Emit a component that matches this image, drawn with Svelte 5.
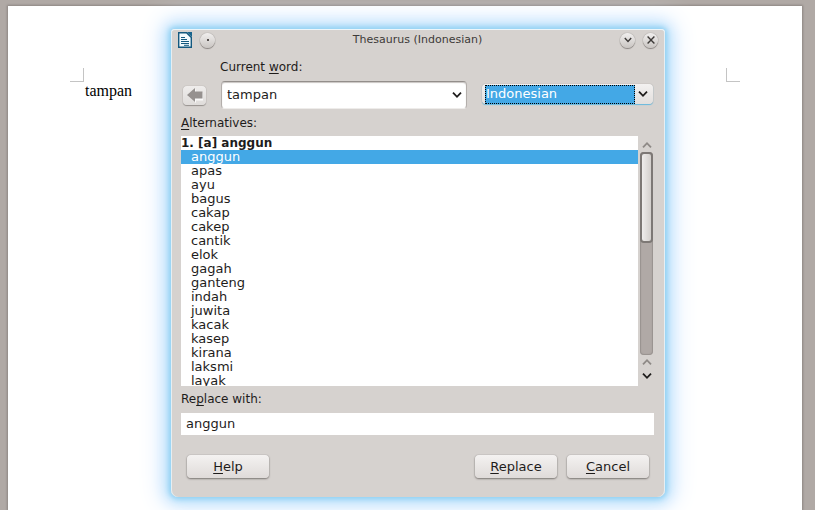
<script>
  const words = [
    'anggun', 'apas', 'ayu', 'bagus', 'cakap', 'cakep', 'cantik', 'elok', 'gagah',
    'ganteng', 'indah', 'juwita', 'kacak', 'kasep', 'kirana', 'laksmi', 'layak'
  ];
  let current = $state('tampan');
  let replacement = $state('anggun');
  let language = $state('Indonesian');
</script>

{#snippet chevron(up, size)}
  <svg class="chevron" class:up width={size} height={size} viewBox="0 0 10 10" aria-hidden="true">
    <path d="M1 2.6 5 6.8l4-4.2" fill="none" stroke="currentColor" stroke-width="1.8" />
  </svg>
{/snippet}

<div class="desktop">
  <main class="sheet">
    <div class="body-area">
      <span class="crop left"></span>
      <span class="crop right"></span>
      <p>tampan</p>
    </div>
  </main>

  <div class="dialog" role="dialog" aria-labelledby="title">
    <header>
      <svg width="14" height="16" viewBox="0 0 14 16" aria-hidden="true">
        <path d="M.7.7H8.6L13.3 5.4v9.9H.7z" fill="#f2fafd" stroke="#14597f" stroke-width="1.4" />
        <path d="M9 0h5v5z" fill="#17648d" />
        <path d="M3 5.5h4M3 7.5h6M3 9.5h8M3 11.5h8M6 13.3h5" stroke="#14597f" stroke-width="1" />
      </svg>
      <button class="round" aria-label="Window menu"><i></i></button>
      <h1 id="title">Thesaurus (Indonesian)</h1>
      <button class="round" aria-label="Minimize">{@render chevron(false, 8)}</button>
      <button class="round" aria-label="Close">
        <svg width="8" height="8" viewBox="0 0 8 8" aria-hidden="true">
          <path d="m.6.6 6.8 6.8M7.4.6.6 7.4" stroke="currentColor" stroke-width="1.4" />
        </svg>
      </button>
    </header>

    <div class="lookup">
      <label class="word-label" for="word">Current <u>w</u>ord:</label>
      <button class="back" aria-label="Previous word">
        <svg width="16" height="15" viewBox="0 0 16 15" aria-hidden="true">
          <path d="M1 8 9 1v3.500h7v8H9V15z" fill="#fbfafa" />
          <path d="M0 7 8 0v3.500h7.500v7H8V14z" fill="#96918f" />
        </svg>
      </button>
      <div class="combo">
        <input id="word" bind:value={current} />
        <button aria-label="Show recent words">{@render chevron(false, 10)}</button>
      </div>
      <div class="language">
        <select aria-label="Language" bind:value={language}>
          <option>Indonesian</option>
        </select>
        <span>{@render chevron(false, 10)}</span>
      </div>
    </div>

    <div class="label" id="alternatives"><u>A</u>lternatives:</div>
    <div class="list">
      <div class="words" role="listbox" aria-labelledby="alternatives">
        <div class="group">1. [a] anggun</div>
        {#each words as word}
          <button role="option" aria-selected={word === replacement} onclick={() => (replacement = word)}>{word}</button>
        {/each}
      </div>
      <div class="scrollbar">
        <button class="dim" aria-label="Scroll up">{@render chevron(true, 10)}</button>
        <div class="track"><div class="thumb"></div></div>
        <button class="dim" aria-label="Page up">{@render chevron(true, 10)}</button>
        <button aria-label="Scroll down">{@render chevron(false, 10)}</button>
      </div>
    </div>

    <label class="label" for="replace">Re<u>p</u>lace with:</label>
    <input class="replace" id="replace" bind:value={replacement} />

    <footer>
      <button class="push help"><u>H</u>elp</button>
      <button class="push"><u>R</u>eplace</button>
      <button class="push"><u>C</u>ancel</button>
    </footer>
  </div>
</div>

<style>
  .desktop {
    position: relative;
    box-sizing: border-box;
    min-height: 100vh;
    padding: 6px 13px 0 8px;
    overflow: hidden;
    display: flex;
    background: #b0a9a5;
    color: #1e1c1b;
    font: 13px/16px "DejaVu Sans", sans-serif;
  }
  .sheet {
    flex: 1;
    padding: 76px;
    background: #fff;
    box-shadow: 0 0 2px 1px #8d8683;
  }
  .body-area {
    position: relative;
  }
  p {
    margin: 0;
    padding-left: 1px;
    color: #000;
    font: 16px/18px "Liberation Serif", serif;
  }
  .crop {
    position: absolute;
    bottom: 100%;
    width: 13px;
    height: 13px;
    border-bottom: 1px solid #c4c4c4;
  }
  .crop.left {
    right: 100%;
    border-right: 1px solid #c4c4c4;
  }
  .crop.right {
    left: 100%;
    border-left: 1px solid #c4c4c4;
  }
  .dialog {
    position: absolute;
    top: 29px;
    left: 171px;
    right: 150px;
    box-sizing: border-box;
    padding: 0 11px 19px 10px;
    border-radius: 4px 4px 7px 7px;
    background: #d6d2cf;
    box-shadow:
      inset 0 1px #edf6fa,
      inset 1px 0 #e6eef2,
      inset -1px 0 #e6eef2,
      0 0 5px 2px #8fd0f3,
      0 0 14px 5px #b4e0fa,
      0 0 24px 10px #dcebff;
  }
  button,
  input,
  select {
    box-sizing: border-box;
    margin: 0;
    padding: 0;
    border: 0;
    outline: 0;
    background: none;
    color: inherit;
    font: inherit;
  }
  svg {
    display: block;
  }
  .up {
    transform: rotate(180deg);
  }
  u {
    text-underline-offset: 2px;
    text-decoration-thickness: 1px;
  }
  header {
    display: flex;
    align-items: center;
    gap: 8px;
    height: 22px;
    margin: 0 -4px 0 -3px;
    color: #3d3a38;
  }
  h1 {
    flex: 1;
    margin: 0;
    text-align: center;
    font-size: 11px;
    font-weight: normal;
  }
  .round {
    display: grid;
    place-items: center;
    width: 15px;
    height: 15px;
    border-radius: 50%;
    background: linear-gradient(#f1efee, #c9c5c2);
    box-shadow: 0 0 1px #6e6967, 0 1px 1px #8d8885;
  }
  .round i {
    width: 2px;
    height: 2px;
    background: #55504e;
  }
  .lookup {
    display: grid;
    grid-template-columns: 23px 1fr 171px;
    grid-template-rows: 16px 28px;
    align-items: center;
    gap: 6px 15px;
    padding: 8px 1px 6px 2px;
  }
  .word-label {
    grid-column: 2 / 4;
    margin-left: -1px;
    font-size: 12px;
  }
  .back {
    display: grid;
    place-items: center;
    height: 19px;
    border-radius: 4px;
    background: linear-gradient(#efedec, #dfdcda);
    box-shadow: 0 0 1px #8b8683, 0 1px 1px #989390;
  }
  .combo {
    display: flex;
    align-items: center;
    box-sizing: border-box;
    height: 28px;
    padding-right: 4px;
    border: 1px solid #b3aeab;
    border-top-color: #938e8b;
    border-bottom-color: #eeecea;
    border-radius: 4px;
    background: #fff;
    box-shadow: inset 0 1px 1px #c9c5c3;
  }
  .combo input {
    flex: 1;
    min-width: 0;
    padding-left: 5px;
  }
  .language {
    display: grid;
    grid-template-columns: 1fr 20px;
    align-items: center;
    height: 20px;
    margin-bottom: 2px;
    border-radius: 4px;
    background: linear-gradient(#f3f1f0, #e2dfdd);
    box-shadow: 0 0 1px #8b8683, 0 1px 1px #62bfe9;
  }
  .language select {
    grid-area: 1 / 1 / 2 / 3;
    appearance: none;
    height: 19px;
    margin: 0 18px 0 3px;
    border: 1px dotted #000;
    background: #43a8e6;
    color: #fff;
    line-height: 16px;
  }
  .language span {
    grid-area: 1 / 2;
    justify-self: center;
    pointer-events: none;
  }
  .label {
    display: block;
    font-size: 12px;
  }
  .list {
    display: flex;
    gap: 2px;
    height: 250px;
    margin: 5px 0;
  }
  .words {
    flex: 1;
    overflow: hidden;
    background: #fff;
    line-height: 14px;
  }
  .words button {
    display: block;
    width: 100%;
    height: 14px;
    padding-left: 10px;
    text-align: left;
  }
  .words button[aria-selected="true"] {
    background: #43a8e6;
    color: #fff;
  }
  .group {
    font-size: 12px;
    font-weight: bold;
  }
  .scrollbar {
    display: flex;
    flex-direction: column;
    width: 13px;
    margin-right: 1px;
    padding: 2px 0 3px;
  }
  .scrollbar button {
    display: grid;
    place-items: center;
    height: 14px;
  }
  .scrollbar .dim {
    color: #8e8986;
  }
  .track {
    flex: 1;
    border-radius: 4px;
    background: #b0a9a6;
    box-shadow: inset 0 0 1px 1px #98928f;
  }
  .thumb {
    box-sizing: border-box;
    height: 45%;
    border: 2px solid #7d7875;
    border-radius: 4px;
    background: linear-gradient(90deg, #efedec, #d3cfcc);
  }
  .replace {
    display: block;
    width: 100%;
    height: 22px;
    margin-top: 6px;
    padding: 0 5px 1px;
    background: #fff;
  }
  footer {
    display: flex;
    gap: 10px;
    padding: 20px 5px 0 6px;
  }
  .push {
    width: 82px;
    height: 23px;
    border-radius: 4px;
    background: linear-gradient(#f4f2f1, #dfdbd9);
    box-shadow: 0 0 1px #858080, 0 1px 2px #7b7673;
  }
  .help {
    margin-right: auto;
  }
</style>
